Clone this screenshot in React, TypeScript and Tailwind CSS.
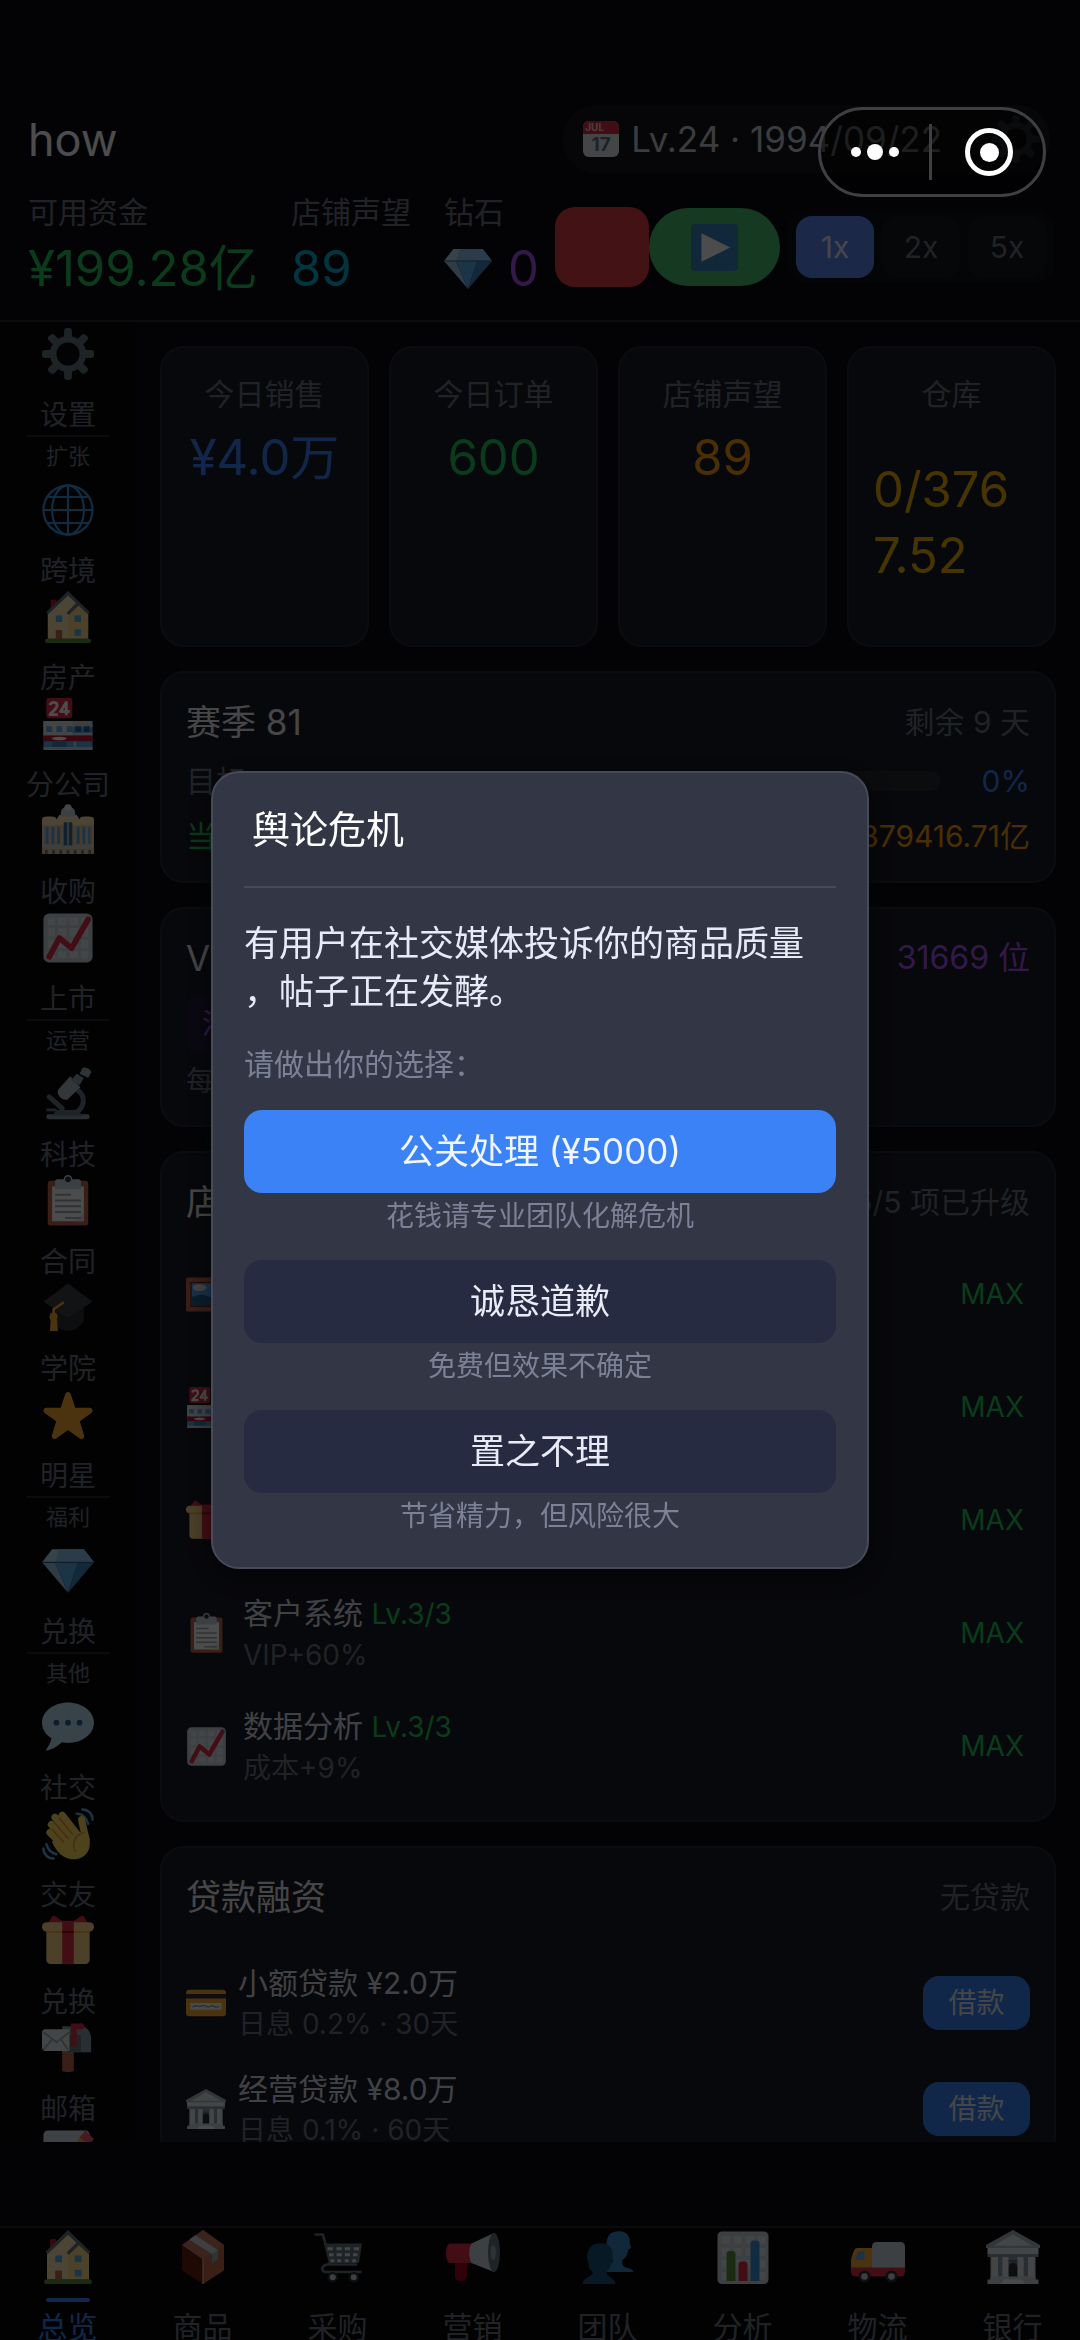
import type { ReactNode } from "react";

const bank = (
  <>
    <path fill="#CCD6DD" d="M3 16h30v18H3z" />
    <path fill="#8899A6" d="M8 18h3v13H8zM25 18h3v13h-3zM4 17h28v3H4z" />
    <path fill="#66757F" d="M13 20h10v12H13z" />
    <path fill="#292F33" d="M15 33v-8c0-4 6-4 6 0v8z" />
    <path fill="#E1E8ED" d="M4 18h4v14H4zM11 18h4v14h-4zM21 18h4v14h-4zM28 18h4v14h-4z" />
    <path fill="#E1E8ED" d="M1 10h34v6H1z" />
    <path fill="#AAB8C2" d="M18 0 0 10v2h36v-2z" />
    <path fill="#E1E8ED" d="M18 3 5 10.500h26z" />
    <path fill="#8899A6" d="M1 16h34v2H1z" />
    <path fill="#CCD6DD" d="M3 31h30v2H3zM1 33h34v3H1z" />
    <path fill="#F5F8FA" d="M12 33h12l2 3H10z" />
  </>
);

const house = (
  <>
    <path fill="#BE1931" d="M6 6h4v8H6z" />
    <path fill="#FFE8B6" d="M4 15 18 2l14 13v18H4z" />
    <path fill="#FFCC4D" d="M18 18 25 9l7 6v18H18z" opacity=".4" />
    <path fill="#66757F" d="M18 0 3 14.500 4.500 16 18 3.200 31.500 16l1.500-1.500z" />
    <path fill="#66757F" d="m25 7-8 8 1.500 1.600 8-7.600z" />
    <path fill="#55ACEE" d="M9.500 17h4.500v4.500H9.500zM22.500 17h4.500v4.500h-4.500zM22.500 26.500h4.500V31h-4.500z" />
    <path fill="#C1694F" d="M9.500 27h4.500v7H9.500z" />
    <path fill="#5C913B" d="M3.500 33h29a1.500 1.500 0 0 1 0 3h-29a1.500 1.500 0 0 1 0-3z" />
  </>
);

const clipboard = (
  <>
    <rect x="4" y="4" width="28" height="31" rx="2" fill="#C1694F" />
    <path fill="#fff" d="M7 8h22v24H7z" />
    <path fill="#E1E8ED" d="M29 26v6h-7z" />
    <path fill="#CCD6DD" d="M25 3h-4a3 3 0 0 0-6 0h-4a2 2 0 0 0-2 2v5h18V5a2 2 0 0 0-2-2z" />
    <circle cx="18" cy="3" r="2" fill="#292F33" />
    <path fill="#99AAB5" d="M9 13h11v1.300H9zM9 17h18v1.300H9zM9 21h18v1.300H9zM9 25h18v1.300H9zM16 29h11v1.300H16z" />
  </>
);

const chart = (
  <>
    <rect x="1" y="1" width="34" height="34" rx="4" fill="#CCD6DD" />
    <path
      fill="#E1E8ED"
      d="M4 4h5v5H4zM11 4h6v5h-6zM19 4h6v5h-6zM27 4h5v5h-5zM4 11h5v6H4zM11 11h6v6h-6zM19 11h6v6h-6zM27 11h5v6h-5zM4 19h5v6H4zM11 19h6v6h-6zM19 19h6v6h-6zM27 19h5v6h-5zM4 27h5v5H4zM11 27h6v5h-6zM19 27h6v5h-6zM27 27h5v5h-5z"
    />
    <path fill="none" stroke="#DD2E44" strokeWidth="4" strokeLinecap="round" strokeLinejoin="round" d="m5 31 7-13 8.500 7L32 5" />
  </>
);

const store = (
  <>
    <path fill="#55ACEE" d="M1 18h34v17H1z" />
    <path fill="#CCD6DD" d="M1 16h34v4H1zM1 24h34v2H1z" />
    <path fill="#E1E8ED" d="M1 16h20v10H1z" />
    <path fill="#5DADEC" d="M3 19.500h4v4H3zM10 19.500h4v4h-4zM17 19.500h4v4h-4z" />
    <path fill="#226699" d="M23 19.500h4v4h-4zM29 19.500h4v4h-4z" />
    <path fill="#BE1931" d="M1 26h34v4H1z" />
    <ellipse cx="12" cy="28" rx="5" ry="1.200" fill="#fff" />
    <path fill="#3B88C3" d="M7 30h10v5H7z" />
    <path fill="#CCD6DD" d="M1 34h34v2H1zM22 30h1.500v5H22z" />
    <rect x="3" width="18" height="14" rx="1.500" fill="#DD2E44" />
    <path fill="none" stroke="#fff" strokeWidth="2" strokeLinejoin="round" d="M5.500 4.800c1-2.600 5-2.300 5 .4 0 2-3 3.600-5 6.300h5.500M16.800 12V3l-4 6.300h6.400" />
  </>
);

const gift = (
  <>
    <path fill="#DD2E44" d="M18 6C13 5 9-1 7 1L4 6l14 3 14-3-3-5c-2-2-6 4-11 5z" />
    <path fill="#FDD888" d="M3 9h30v22a3 3 0 0 1-3 3H6a3 3 0 0 1-3-3z" />
    <rect y="5" width="36" height="6.500" rx="3.200" fill="#FDD888" />
    <path fill="#FCAB40" d="M3 11h30v1.500H3z" />
    <path fill="#DD2E44" d="M14 4h8v30h-8z" />
    <path fill="#A0041E" d="M14 11h8v1.500h-8z" />
  </>
);

const gem = (
  <>
    <path fill="#BDDDF4" d="M7 3h22l7 9H0z" />
    <path fill="#8CCAF7" d="M12 3h12l3 9H9zM29 3h-5l3 9h9z" />
    <path fill="#9FC8E6" d="M0 12h9l9 21z" />
    <path fill="#5DADEC" d="M9 12h16l-7 21z" />
    <path fill="#4289C1" d="M25 12h11L18 33z" />
    <path fill="#2A6797" d="M0 11.600h36v.8H0z" />
  </>
);

const gear = (
  <>
    <g fill="#66757F">
      {[0, 45, 90, 135].map((a) => (
        <rect key={a} x="15.300" y="0" width="5.400" height="36" rx="2" transform={`rotate(${a} 18 18)`} />
      ))}
      <circle cx="18" cy="18" r="12.500" />
    </g>
    <circle cx="18" cy="18" r="8" fill="#0a0b10" />
  </>
);

const ICONS: Record<string, ReactNode> = {
  bank, house, clipboard, chart, store, gift, gem, gear,
  globe: (
    <g fill="none" stroke="#3B94D9" strokeWidth="1.500">
      <circle cx="18" cy="18" r="17" />
      <path d="M18 1v34M1 18h34M4 9h28M4 27h28" />
      <ellipse cx="18" cy="18" rx="11" ry="17" />
    </g>
  ),
  palace: (
    <>
      <path fill="#DCC8A8" d="M0 11h36v23H0z" />
      <path fill="#FFE8B6" d="M0 10c0-2 3-2 5-2s5 0 5 2l2-3h12l2 3c0-2 3-2 5-2s5 0 5 2v4H0z" />
      <path fill="#CCD6DD" d="M13 6c0-3 2-5 5-5s5 2 5 5v2H13z" />
      <circle cx="18" cy="2" r="2.500" fill="#E1E8ED" />
      <path fill="#55ACEE" d="M2.500 15h2v12h-2zM6.500 15h2v12h-2zM10.500 15h2v12h-2zM24 15h2v12h-2zM28 15h2v12h-2zM32 15h1.500v12H32z" />
      <path fill="#3B6E94" d="M15 12h6v17h-6z" />
      <path fill="#CCD6DD" d="M17.500 12h1v17h-1zM0 28h36v2H0z" />
      <path fill="#8A7A60" d="M2 31h2v3H2zM7 31h2v3H7zM12 31h2v3h-2zM17 31h2v3h-2zM22 31h2v3h-2zM27 31h2v3h-2zM32 31h2v3h-2z" />
    </>
  ),
  microscope: (
    <>
      <path fill="none" stroke="#66757F" strokeWidth="3.500" d="M24 15c7 4 6 14-3 17" />
      <path fill="none" stroke="#66757F" strokeWidth="3.500" strokeLinecap="round" d="m5 20 9 8" />
      <rect x="3" y="32" width="30" height="3.500" rx="1.700" fill="#8899A6" />
      <path fill="#66757F" d="M10 29h15l3 4H7z" />
      <path fill="#AAB8C2" d="m17 6 9 5-6 11c-3 2-9-1-8-5z" transform="rotate(18 19 14)" />
      <path fill="#8899A6" d="m24 4 5 3-3 5-6-3.500z" />
      <path fill="#99AAB5" d="M28 0c2-1 6 1 6 3l-2 4-6-3z" />
      <path fill="#66757F" d="M3 28h7v2H3z" />
    </>
  ),
  cap: (
    <>
      <path fill="#292F33" d="M7 18v9c6 9 16 9 22 0v-9z" />
      <path fill="#394146" d="M18 1 1 13.500 18 25l17-11.500z" />
      <path fill="none" stroke="#FFAC33" strokeWidth="1.800" d="M15 14 8 19v8" />
      <circle cx="8" cy="24" r="2.800" fill="#FFAC33" />
      <path fill="#FFAC33" d="M6 26h4.500l.5 8H5.500z" />
    </>
  ),
  star: (
    <path
      fill="#FFAC33"
      d="M27.287 34.627c-.404 0-.806-.124-1.152-.371L18 28.422l-8.135 5.834a1.970 1.970 0 0 1-2.312-.008 1.971 1.971 0 0 1-.721-2.194l3.034-9.792-8.062-5.681a1.980 1.980 0 0 1-.708-2.203 1.978 1.978 0 0 1 1.866-1.363L12.947 13l3.179-9.549a1.976 1.976 0 0 1 3.749 0L23 13l10.036.015a1.975 1.975 0 0 1 1.159 3.566l-8.062 5.681 3.034 9.792a1.970 1.970 0 0 1-.72 2.194 1.957 1.957 0 0 1-1.160.379z"
    />
  ),
  chat: (
    <>
      <path
        fill="#BDDDF4"
        d="M18 1C8.059 1 0 7.268 0 15c0 4.368 2.574 8.268 6.604 10.835C6 28 5 31 2.500 34.500c5-1 9-3.500 11.216-5.916C15 28.900 16.500 29 18 29c9.941 0 18-6.268 18-14S27.941 1 18 1z"
      />
      <g fill="#2A6797">
        <circle cx="10" cy="15" r="2" />
        <circle cx="18" cy="15" r="2" />
        <circle cx="26" cy="15" r="2" />
      </g>
    </>
  ),
  wave: (
    <>
      <g fill="none" stroke="#5DADEC" strokeWidth="1.700" strokeLinecap="round">
        <path d="M24 4c4 0 7 3 8 7M28 1c4 0 7 3 7 7M3 25c1 4 3 6 7 7M1 28c0 4 3 7 7 7" />
      </g>
      <g fill="none" stroke="#FFDC5D" strokeWidth="5" strokeLinecap="round">
        <path d="m14 5 11 14M9 6.500 22 22M6.500 11.500 19 25M5.500 17 17 28" />
        <path d="M27.500 8c.5 4 2 9 3 14" />
      </g>
      <path fill="#FFDC5D" d="M13 12 26 17c4-2 7 0 7 6 1 8-5 12.500-11 12.500-7 0-12-5-15-12z" />
      <g fill="none" stroke="#EF9645" strokeWidth="1.100" strokeLinecap="round">
        <path d="m12 7 9 11M8.500 10 18 21M7 15l8 8.500M29 17c-5 1-9 6-6 13" />
      </g>
    </>
  ),
  mailbox: (
    <>
      <path fill="#C1694F" d="M14 19h8v15c-2 1-6 1-8 0z" />
      <path fill="#8899A6" d="M14 3h13c4 0 7 4 7 8v10H14z" />
      <path fill="#66757F" d="M17 9h10v12H17z" />
      <path fill="#E1E8ED" d="M0 7c0-1 1-2 2-2h17v15H2c-1 0-2-1-2-2z" />
      <path fill="none" stroke="#99AAB5" strokeWidth="1.200" d="m1 7 9 7 9-7M1 19l6-7M18 19l-5-7" />
      <path fill="#DD2E44" d="M20 1h6a2 2 0 0 1 2 4h-4v10a2 2 0 0 1-4 0z" />
    </>
  ),
  memo: (
    <>
      <rect x="1" y="1" width="32" height="36" rx="3" fill="#D3DCE3" />
      <path fill="#99AAB5" d="M6 9h16v1.300H6zM6 14h14v1.300H6z" />
      <path fill="#FFAC33" d="M32 8 18 28l-4 2 1-5L27 4z" />
      <path fill="#EA596E" d="m30 1 6 6-3 4-7-5z" />
    </>
  ),
  picture: (
    <>
      <rect y="3" width="36" height="30" rx="1.500" fill="#C1694F" />
      <path fill="#662113" d="M4 7h28v22H4z" />
      <path fill="#55ACEE" d="M5 8h26v20H5z" />
      <path fill="#226699" d="m5 20 9-2 17 5v5H5z" />
      <ellipse cx="12" cy="12" rx="6" ry="3" fill="#E1E8ED" />
      <path fill="#4B545D" d="M20 28 31 12v16z" />
    </>
  ),
  card: (
    <>
      <rect y="6" width="36" height="24" rx="3" fill="#FFAC33" />
      <path fill="#292F33" d="M0 10h36v4H0z" />
      <path fill="#F4F7F9" d="M4 18h28v6H4z" />
      <path fill="none" stroke="#8899A6" strokeWidth="1.200" d="M6 22c2-3 4-1 6-1s3-2 6 0 5-2 7 0 3 0 5 0" />
    </>
  ),
  box: (
    <>
      <path fill="#662113" d="M4 10v17l14 9V19z" />
      <path fill="#C1694F" d="M32 10v17l-14 9V19z" />
      <path fill="#D99E82" d="M18 0 4 10l14 9.500L32 10z" opacity=".9" />
      <path fill="#C1694F" d="M18 0 4 10l14 9.500L32 10z" opacity=".6" />
      <path fill="#99AAB5" d="m9 6 15 10v6l4-2.500v-6L13 3.500z" />
      <path fill="#CCD6DD" d="M9 6.500 24 16l4-2.500L13 3.500z" />
      <path fill="#D99E82" d="M17.500 19h1v17h-1z" />
    </>
  ),
  cart: (
    <>
      <path fill="none" stroke="#66757F" strokeWidth="1.800" strokeLinecap="round" strokeLinejoin="round" d="M3 3h5l5 20h-2c-5 1-4 5-1 5h23M13 23h17" />
      <path fill="#66757F" d="M9 9h25l-2 13H13z" />
      <path
        fill="#E1E8ED"
        d="M11 11.500h3.500v2H11zM17 11.500h3.500v2H17zM22.500 11.500H26v2h-3.500zM28.500 11.500H32v2h-3.500zM12 15.500h3v2h-3zM17 15.500h3.500v2H17zM22.500 15.500H26v2h-3.500zM28 15.500h3v2h-3zM13 19.500h2.500v2H13zM17.500 19.500H20v2h-2.500zM22.500 19.500H25v2h-2.500zM27.500 19.500H30v2h-2.500z"
      />
      <g fill="#292F33">
        <circle cx="14.500" cy="31.500" r="3.500" />
        <circle cx="28.500" cy="31.500" r="3.500" />
      </g>
      <g fill="#CCD6DD">
        <circle cx="14.500" cy="31.500" r="2" />
        <circle cx="28.500" cy="31.500" r="2" />
      </g>
    </>
  ),
  horn: (
    <>
      <path fill="#A0041E" d="M6 20h8v11c0 4-8 4-8 0z" />
      <path fill="#DD2E44" d="M3 9h15v13H3c-4 0-4-13 0-13z" />
      <path fill="#CCD6DD" d="M17 9 32 2v26l-15-6c-2-3-2-10 0-13z" />
      <ellipse cx="32" cy="15" rx="4" ry="13" fill="#66757F" />
      <ellipse cx="31.500" cy="15" rx="1.800" ry="5" fill="#99AAB5" />
    </>
  ),
  people: (
    <>
      <path
        fill="#3B88C3"
        d="M24 1c6-1 9 3 8.500 8l1 3-2 1c-.5 4-2 6-4 7v3c1 3 7 2 7.500 5H17V10c0-5 2-9 7-9z"
      />
      <path
        fill="#1B5580"
        d="M12 9c7-1 10 4 9 10l1 2-2 2c-.5 2-1 3-3 5 0 4 5 3 6 8H1c1-5 6-4 7-8-3-2-3-4-3-6l-1-3c0-6 3-10 8-10z"
      />
    </>
  ),
  bars: (
    <>
      <rect x="1" y="1" width="34" height="35" rx="3" fill="#CCD6DD" />
      <path
        fill="#E1E8ED"
        d="M4 4h5v5H4zM12 4h5v5h-5zM20 4h5v5h-5zM28 4h5v5h-5zM4 12h5v5H4zM12 12h5v5h-5zM20 12h5v5h-5zM28 12h5v5h-5zM4 20h5v5H4zM12 20h5v5h-5zM20 20h5v5h-5zM28 20h5v5h-5zM4 28h5v5H4zM28 28h5v5h-5z"
      />
      <path fill="#5C913B" d="M7 16a2 2 0 0 1 2-2h2a2 2 0 0 1 2 2v18H7z" />
      <path fill="#DD2E44" d="M15 23a2 2 0 0 1 2-2h2a2 2 0 0 1 2 2v11h-6z" />
      <path fill="#3B94D9" d="M23 9a2 2 0 0 1 2-2h2a2 2 0 0 1 2 2v25h-6z" />
    </>
  ),
  truck: (
    <>
      <path fill="#FFAC33" d="M4 12h11v14H0v-6c1-4 2-8 4-8z" />
      <path fill="#55ACEE" d="M6 14h3v6H3c.5-3 1.500-6 3-6z" />
      <path fill="#CCD6DD" d="M14 11a3 3 0 0 1 3-3h16a3 3 0 0 1 3 3v15H14z" />
      <path fill="#DD2E44" d="M0 25h36v3a3 3 0 0 1-3 3H3a3 3 0 0 1-3-3z" />
      <g fill="#292F33">
        <circle cx="9" cy="31" r="4" />
        <circle cx="27" cy="31" r="4" />
      </g>
      <g fill="#CCD6DD">
        <circle cx="9" cy="31" r="2.200" />
        <circle cx="27" cy="31" r="2.200" />
      </g>
    </>
  ),
  play: (
    <>
      <rect width="36" height="36" rx="3" fill="#3B88C3" />
      <path fill="#fff" d="M8 7v22l22-11z" />
    </>
  ),
};

function Icon({ name, className }: { name: string; className: string }) {
  return (
    <svg viewBox="0 0 36 36" aria-hidden="true" className={`shrink-0 overflow-visible ${className}`}>
      {ICONS[name]}
    </svg>
  );
}

function CalendarIcon() {
  return (
    <span aria-hidden="true" className="flex h-9 w-9 flex-col overflow-hidden rounded-md bg-[#e1e8ed] text-center font-bold">
      <span className="bg-[#dd2e44] pl-0.5 text-left text-[10px] leading-[13px] text-[#f5d0d0]">JUL</span>
      <span className="text-[19px] leading-[22px] text-[#66757f]">17</span>
    </span>
  );
}

const SIDEBAR = [
  { title: "", items: [["gear", "设置"]] },
  { title: "扩张", items: [["globe", "跨境"], ["house", "房产"], ["store", "分公司"], ["palace", "收购"], ["chart", "上市"]] },
  { title: "运营", items: [["microscope", "科技"], ["clipboard", "合同"], ["cap", "学院"], ["star", "明星"]] },
  { title: "福利", items: [["gem", "兑换"]] },
  { title: "其他", items: [["chat", "社交"], ["wave", "交友"], ["gift", "兑换"], ["mailbox", "邮箱"], ["memo", "公告"]] },
];

const STATS = [
  { label: "今日销售", value: "¥4.0万", color: "text-[#3b82f6]" },
  { label: "今日订单", value: "600", color: "text-[#22c55e]" },
  { label: "店铺声望", value: "89", color: "text-[#f59e0b]" },
];

const UPGRADES = [
  ["picture", "店面装修", "客流+30%"],
  ["store", "店铺规模", "容量+30%"],
  ["gift", "营销活动", "转化+15%"],
  ["clipboard", "客户系统", "VIP+60%"],
  ["chart", "数据分析", "成本+9%"],
];

const LOANS = [
  ["card", "小额贷款 ¥2.0万", "日息 0.2% · 30天"],
  ["bank", "经营贷款 ¥8.0万", "日息 0.1% · 60天"],
];

const TABS = [
  ["house", "总览"], ["box", "商品"], ["cart", "采购"], ["horn", "营销"],
  ["people", "团队"], ["bars", "分析"], ["truck", "物流"], ["bank", "银行"],
];

const CHOICES = [
  { label: "公关处理 (¥5000)", hint: "花钱请专业团队化解危机", style: "bg-[#3b82f6] text-[#f1f5ff]" },
  { label: "诚恳道歉", hint: "免费但效果不确定", style: "bg-[#272b41] text-[#e8ebf5]" },
  { label: "置之不理", hint: "节省精力，但风险很大", style: "bg-[#272b41] text-[#e8ebf5]" },
];

function Card({ children }: { children: ReactNode }) {
  return (
    <section className="shrink-0 rounded-3xl border-2 border-[#262833] bg-[#191b26] p-6">{children}</section>
  );
}

function CardTitle({ title, note, noteClass = "text-[30px] text-[#6b7280]" }: { title: string; note: string; noteClass?: string }) {
  return (
    <div className="flex h-[50px] items-center justify-between">
      <h2 className="text-[35px] text-[#e8eaf0]">{title}</h2>
      <span className={noteClass}>{note}</span>
    </div>
  );
}

function Header() {
  return (
    <header className="shrink-0 border-b-2 border-[#252833] pt-[105px] pr-[26px] pb-5 pl-7">
      <div className="flex h-[68px] items-center justify-between">
        <h1 className="text-[45px] leading-none text-white">how</h1>
        <div className="mr-1 flex items-center rounded-full bg-[#15171f]">
          <div className="flex h-16 items-center gap-3 pr-10 pl-5">
            <CalendarIcon />
            <span className="text-[35px] text-[#c4c8d0]">Lv.24 · 1994/09/22</span>
          </div>
          <button type="button" aria-label="设置" className="flex h-[68px] w-[68px] items-center justify-center rounded-full bg-[#1a1c24] opacity-60">
            <Icon name="gear" className="h-12 w-12" />
          </button>
        </div>
      </div>
      <div className="mt-4 flex h-[111px] items-start">
        <dl className="flex flex-1 items-start pt-0.5">
          <div className="w-[263px]">
            <dt className="text-[30px] leading-[42px] text-[#6b7280]">可用资金</dt>
            <dd className="text-[49px] leading-[72px] whitespace-nowrap text-[#22c55e]">¥199.28亿</dd>
          </div>
          <div className="w-[153px]">
            <dt className="text-[30px] leading-[42px] text-[#6b7280]">店铺声望</dt>
            <dd className="text-[49px] leading-[72px] text-[#06b6d4]">89</dd>
          </div>
          <div>
            <dt className="text-[30px] leading-[42px] text-[#6b7280]">钻石</dt>
            <dd className="flex items-center gap-4 text-[49px] leading-[72px] text-[#a855f7]">
              <Icon name="gem" className="h-12 w-12" />0
            </dd>
          </div>
        </dl>
        <div className="mt-[18px] flex items-center">
          <button type="button" aria-label="停止" className="h-20 w-[94px] rounded-[20px] bg-[#dc3f43]" />
          <button type="button" aria-label="播放" className="flex h-[78px] w-[131px] items-center justify-center rounded-full bg-[#46bf6e]">
            <Icon name="play" className="h-[47px] w-[47px]" />
          </button>
          <div className="ml-2 flex gap-2 rounded-[18px] bg-[#101219] px-2 py-1 text-[30px]">
            <button type="button" className="h-[62px] w-[78px] rounded-2xl bg-[#5c86ee] text-[#e8ebf5]">1x</button>
            <button type="button" className="h-[62px] w-[78px] rounded-2xl bg-[#15181f] text-[#6b7280]">2x</button>
            <button type="button" className="h-[62px] w-[78px] rounded-2xl bg-[#15181f] text-[#6b7280]">5x</button>
          </div>
        </div>
      </div>
    </header>
  );
}

function Sidebar() {
  return (
    <nav aria-label="功能" className="flex w-[136px] shrink-0 flex-col items-center overflow-hidden bg-[#07080d] pt-1.5">
      {SIDEBAR.map((group) => (
        <div key={group.title} className="flex w-[83px] shrink-0 flex-col">
          {group.title && (
            <div className="h-[49px] border-t-2 border-[#262a33] text-center text-[22px] leading-[38px] text-[#6b7280]">{group.title}</div>
          )}
          {group.items.map(([icon, label], i) => (
            <button type="button" key={i} className="flex flex-col items-center gap-[15px]">
              <Icon name={icon} className="h-[52px] w-[52px]" />
              <span className="text-[28px] leading-10 whitespace-nowrap text-[#6b7280]">{label}</span>
            </button>
          ))}
        </div>
      ))}
    </nav>
  );
}

function Dashboard() {
  return (
    <main className="flex min-w-0 flex-1 flex-col gap-6 overflow-hidden p-6">
      <div className="grid h-[301px] shrink-0 grid-cols-4 gap-5 text-center">
        {STATS.map((s) => (
          <section key={s.label} className="rounded-3xl border-2 border-[#262833] bg-[#191b26] px-2 py-6">
            <h2 className="text-[30px] leading-[45px] text-[#6b7280]">{s.label}</h2>
            <p className={`mt-2 text-[49px] leading-[66px] whitespace-nowrap ${s.color}`}>{s.value}</p>
          </section>
        ))}
        <section className="rounded-3xl border-2 border-[#262833] bg-[#191b26] p-6">
          <h2 className="text-[30px] leading-[45px] text-[#6b7280]">仓库</h2>
          <p className="mt-10 text-left text-[49px] leading-[66px] break-all text-[#eab308]">0/3767.52</p>
        </section>
      </div>

      <Card>
        <CardTitle title="赛季 81" note="剩余 9 天" />
        <div className="mt-[13px] flex h-[42px] items-center gap-5 text-[30px]">
          <span className="text-[#6b7280]">目标</span>
          <div role="progressbar" aria-valuenow={0} aria-label="目标" className="h-5 flex-1 rounded-full bg-[#262830]" />
          <span className="w-[69px] text-right text-[#3b82f6]">0%</span>
        </div>
        <div className="mt-[13px] flex h-[42px] items-center justify-between text-[30px]">
          <span className="text-[#22c55e]">当前</span>
          <span className="text-[#f59e0b]">¥379416.71亿</span>
        </div>
      </Card>

      <Card>
        <CardTitle title="VIP" note="31669 位" noteClass="text-[32px] text-[#a855f7]" />
        <div className="mt-[13px] flex">
          <span className="rounded-xl bg-[#221a38] px-4 text-[28px] leading-[57px] text-[#a855f7]">活跃</span>
        </div>
        <p className="mt-2 text-[28px] leading-10 text-[#6b7280]">每日</p>
      </Card>

      <Card>
        <CardTitle title="店铺升级" note="5/5 项已升级" />
        <ul className="mt-[17px] flex flex-col gap-[13px]">
          {UPGRADES.map(([icon, name, effect]) => (
            <li key={name} className="flex h-[100px] items-center pr-1.5">
              <Icon name={icon} className="h-[41px] w-[41px]" />
              <div className="ml-4 flex-1">
                <p className="text-[30px] leading-[42px] text-[#d8dbe4]">
                  {name} <span className="text-[28px] text-[#22c55e]">Lv.3/3</span>
                </p>
                <p className="text-[28px] leading-10 text-[#6b7280]">{effect}</p>
              </div>
              <span className="text-[28px] text-[#22c55e]">MAX</span>
            </li>
          ))}
        </ul>
      </Card>

      <Card>
        <CardTitle title="贷款融资" note="无贷款" />
        <ul className="mt-[34px] flex flex-col gap-[13px]">
          {LOANS.map(([icon, name, terms]) => (
            <li key={name} className="flex h-[93px] items-center">
              <Icon name={icon} className="h-10 w-10" />
              <div className="ml-3 flex-1">
                <p className="text-[30px] leading-[42px] text-[#d8dbe4]">{name}</p>
                <p className="text-[28px] leading-10 text-[#6b7280]">{terms}</p>
              </div>
              <button type="button" className="h-[54px] w-[107px] rounded-2xl bg-[#3b82f6] text-[28px] text-[#e8ebf5]">借款</button>
            </li>
          ))}
        </ul>
      </Card>
    </main>
  );
}

function TabBar() {
  return (
    <nav aria-label="主导航" className="mt-[84px] grid h-[114px] shrink-0 grid-cols-8 overflow-hidden border-t-2 border-[#22242c] bg-[#07080d]">
      {TABS.map(([icon, label], i) => (
        <button type="button" key={label} className="flex flex-col items-center pt-0.5">
          <Icon name={icon} className="h-[54px] w-[54px]" />
          <span className={i === 0 ? "mt-3.5 h-1 w-11 rounded-full bg-[#3b82f6]" : "mt-3.5 h-1 w-11"} />
          <span className={i === 0 ? "mt-1 text-[30px] leading-[42px] text-[#3b82f6]" : "mt-1 text-[30px] leading-[42px] text-[#6b7280]"}>
            {label}
          </span>
        </button>
      ))}
    </nav>
  );
}

function CrisisDialog() {
  return (
    <div className="fixed inset-0 z-10 flex items-center justify-center bg-black/70">
      <div
        role="dialog"
        aria-modal="true"
        aria-labelledby="crisis-title"
        className="w-[658px] max-w-full rounded-[28px] border-2 border-[#474a57] bg-[#323645] p-[31px] shadow-[0_8px_30px_rgba(0,0,0,0.5)]"
      >
        <h2 id="crisis-title" className="border-b-2 border-[#474a59] px-2 pb-8 text-[38px] leading-[50px] text-white">
          舆论危机
        </h2>
        <p className="mt-[31px] text-[35px] leading-[48px] text-[#e8ebf7] [line-break:anywhere]">
          有用户在社交媒体投诉你的商品质量，帖子正在发酵。
        </p>
        <p className="mt-7 text-[30px] leading-[42px] text-[#7c8296]">请做出你的选择：</p>
        <div className="mt-[25px] flex flex-col gap-6">
          {CHOICES.map((c) => (
            <div key={c.label} className="text-center">
              <button type="button" className={`h-[83px] w-full rounded-[18px] text-[35px] ${c.style}`}>{c.label}</button>
              <p className="mt-[3px] text-[28px] leading-10 text-[#7c8296]">{c.hint}</p>
            </div>
          ))}
        </div>
      </div>
    </div>
  );
}

function HostCapsule() {
  return (
    <div className="absolute top-[107px] right-[34px] z-20 flex h-[90px] w-[228px] items-center rounded-full border-3 border-[#3e3f42] bg-black/50">
      <button type="button" aria-label="更多" className="flex h-full flex-1 items-center justify-center gap-1.5">
        <span className="h-2.5 w-2.5 rounded-full bg-white" />
        <span className="h-4 w-4 rounded-full bg-white" />
        <span className="h-2.5 w-2.5 rounded-full bg-white" />
      </button>
      <span className="h-14 w-[3px] bg-[#3e3f42]" />
      <button type="button" aria-label="关闭" className="flex h-full flex-1 items-center justify-center pl-1">
        <span className="flex h-12 w-12 items-center justify-center rounded-full border-[5px] border-white">
          <span className="h-[19px] w-[19px] rounded-full bg-white" />
        </span>
      </button>
    </div>
  );
}

export default function App() {
  return (
    <div
      lang="zh-CN"
      className="relative flex h-screen flex-col overflow-hidden bg-[#0b0d17] font-[Inter,'Noto_Sans_CJK_SC',sans-serif] font-normal"
    >
      <Header />
      <div className="flex min-h-0 flex-1">
        <Sidebar />
        <Dashboard />
      </div>
      <TabBar />
      <CrisisDialog />
      <HostCapsule />
    </div>
  );
}
